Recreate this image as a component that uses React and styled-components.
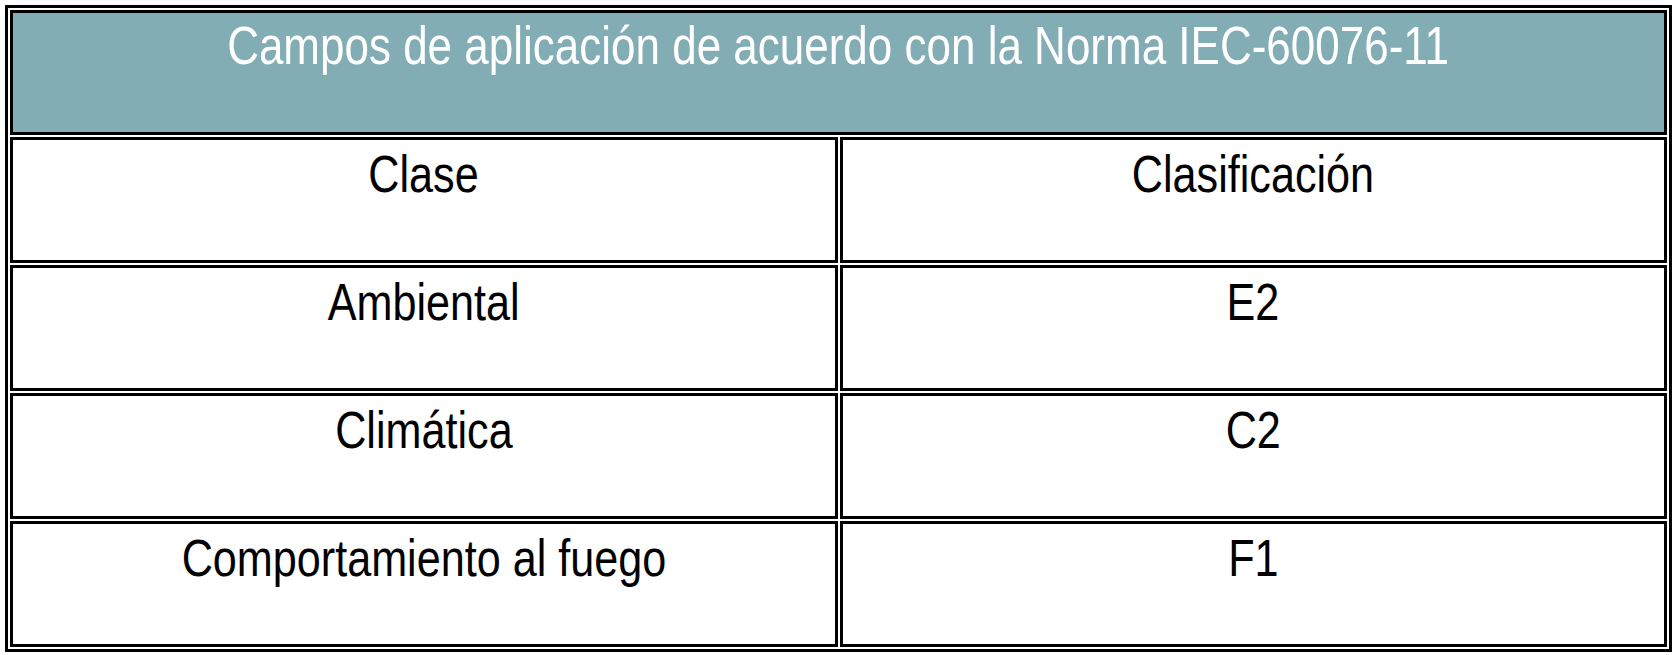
import React from "react";
import styled, { createGlobalStyle } from "styled-components";

const GlobalStyle = createGlobalStyle`
  body {
    margin: 0;
    background: #ffffff;
    font-family: "Liberation Sans Narrow", "Arial Narrow", "Liberation Sans", Arial, sans-serif;
  }
`;

const Page = styled.div`
  padding: 5px 4px 0 5px;
`;

const Table = styled.table`
  width: 1667px;
  border: 3px solid #000;
  border-spacing: 2px;
  table-layout: fixed;
`;

const Row = styled.tr`
  height: ${(p) => p.$h}px;
`;

const HeadCell = styled.th`
  background: #83adb5;
  color: #ffffff;
  border: 3px solid #000;
  font-weight: normal;
  font-size: 53px;
  line-height: 60px;
  text-align: center;
  vertical-align: top;
  padding: 3px 0 0;
  white-space: nowrap;
`;

const Cell = styled.td`
  border: 3px solid #000;
  color: #000;
  font-size: 52px;
  line-height: 60px;
  text-align: center;
  vertical-align: top;
  padding: 4px 0 0;
  white-space: nowrap;
`;

// no narrow face installed, so squeeze the glyphs to Arial Narrow width
const Narrow = styled.span`
  display: inline-block;
  transform: scaleX(0.83);
  transform-origin: center;
`;

const rows = [
  ["Clase", "Clasificación"],
  ["Ambiental", "E2"],
  ["Climática", "C2"],
  ["Comportamiento al fuego", "F1"],
];

function App() {
  return (
    <Page>
      <GlobalStyle />
      <Table>
        <thead>
          <Row $h={125}>
            <HeadCell colSpan={2}>
              <Narrow>Campos de aplicación de acuerdo con la Norma IEC-60076-11</Narrow>
            </HeadCell>
          </Row>
        </thead>
        <tbody>
          {rows.map((r, i) => (
            <Row $h={126} key={i}>
              <Cell>
                <Narrow>{r[0]}</Narrow>
              </Cell>
              <Cell>
                <Narrow>{r[1]}</Narrow>
              </Cell>
            </Row>
          ))}
        </tbody>
      </Table>
    </Page>
  );
}

export default App;
